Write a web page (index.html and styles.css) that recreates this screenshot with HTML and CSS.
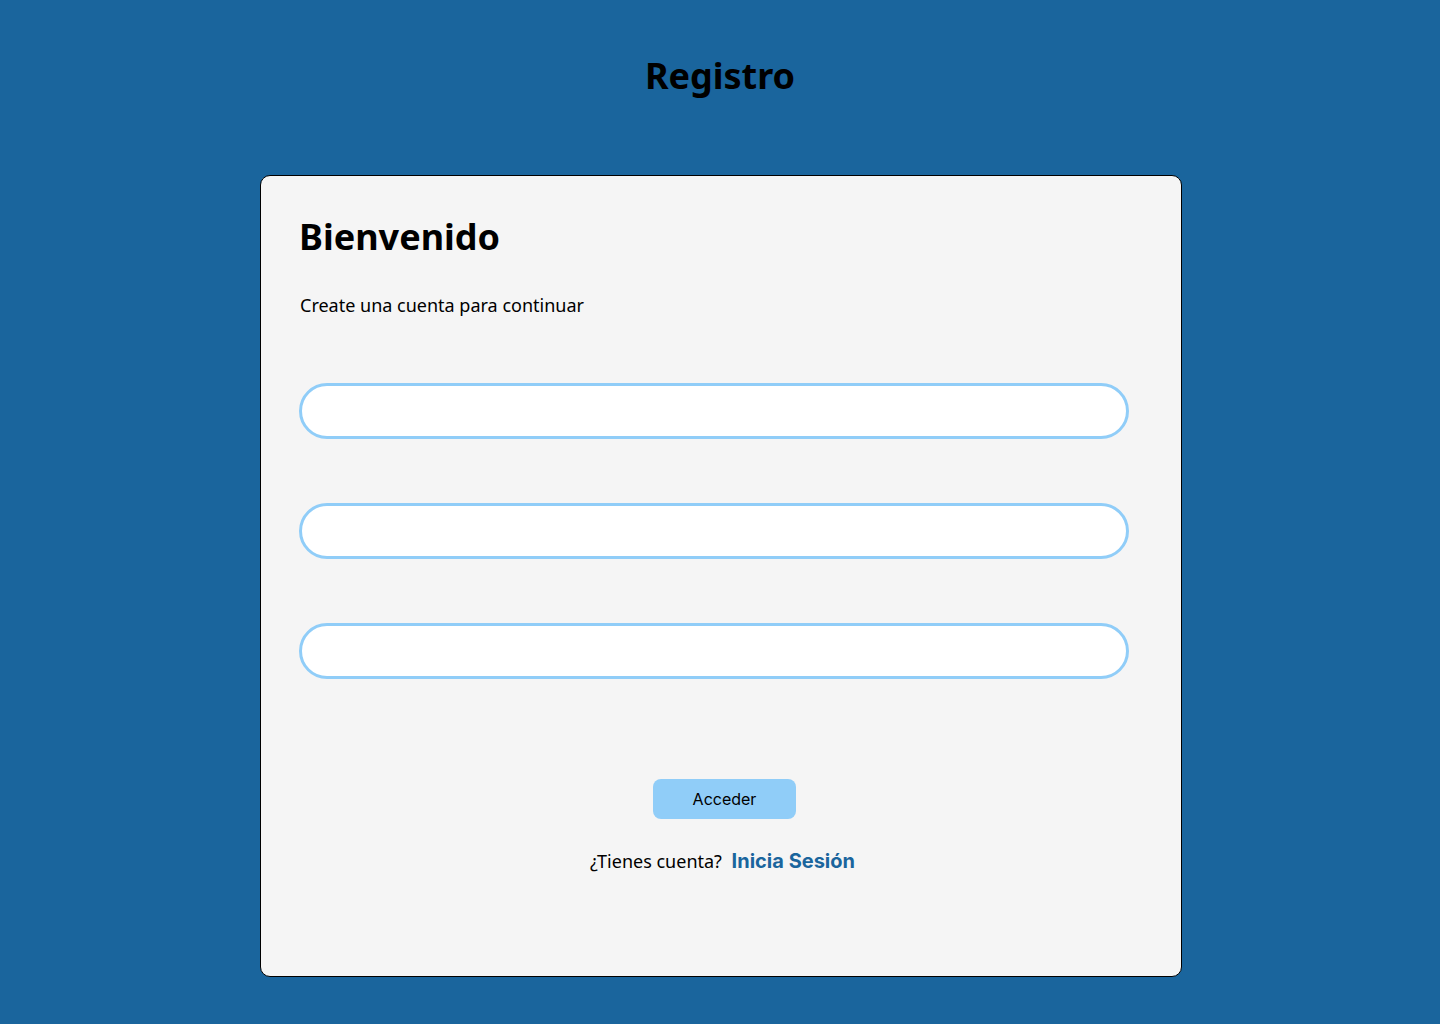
FILE: index.html
```html
<!DOCTYPE html>
<html lang="es">
<head>
<meta charset="utf-8">
<title>Registro</title>
<link rel="stylesheet" href="styles.css">
</head>
<body>
<h1 class="page-title">Registro</h1>
<main class="card">
  <h2 class="card-title">Bienvenido</h2>
  <p class="subtitle">Create una cuenta para continuar</p>
  <div class="fields">
    <input class="field" type="text" aria-label="Nombre">
    <input class="field" type="email" aria-label="Correo">
    <input class="field" type="password" aria-label="Contraseña">
  </div>
  <div class="actions">
    <button class="btn" type="button">Acceder</button>
  </div>
  <p class="footer">¿Tienes cuenta? <a class="link" href="#">Inicia Sesión</a></p>
</main>
</body>
</html>
```
FILE: styles.css
```css
html, body {
  margin: 0;
  padding: 0;
}
body {
  background: #1a659d;
  font-family: "Noto Sans", "Open Sans", sans-serif;
  color: #000;
  min-height: 1024px;
  padding-top: 56px;
  box-sizing: border-box;
}
.page-title {
  margin: 0 0 79px;
  text-align: center;
  font-size: 36px;
  line-height: 40px;
  font-weight: 700;
}
.card {
  box-sizing: border-box;
  width: 922px;
  height: 802px;
  margin: 0 0 0 260px;
  background: #f5f5f5;
  border: 1px solid #000;
  border-radius: 10px;
  padding: 38px 52px 0 38px;
}
.card-title {
  margin: 0;
  font-size: 36px;
  line-height: 46px;
  font-weight: 700;
}
.subtitle {
  margin: 33px 0 0 1px;
  font-size: 18px;
  line-height: 24px;
}
.fields {
  margin-top: 66px;
  display: flex;
  flex-direction: column;
  gap: 64px;
}
.field {
  box-sizing: border-box;
  width: 830px;
  height: 56px;
  border: 3px solid #90cdf8;
  border-radius: 28px;
  background: #fff;
  outline: none;
  padding: 0 20px;
  font: inherit;
}
.actions {
  margin-top: 100px;
  display: flex;
  justify-content: center;
  padding-left: 21px;
}
.btn {
  width: 143px;
  height: 40px;
  border: none;
  border-radius: 8px;
  background: #90cdf8;
  font-family: Inter, sans-serif;
  font-size: 16px;
  color: #000;
  cursor: pointer;
}
.footer {
  margin: 30px 0 0;
  text-align: center;
  font-size: 18px;
  line-height: 24px;
  padding-left: 17px;
}
.link {
  margin-left: 5px;
  font-family: Inter, sans-serif;
  font-size: 20px;
  font-weight: 700;
  color: #1a659d;
  text-decoration: none;
}
```
